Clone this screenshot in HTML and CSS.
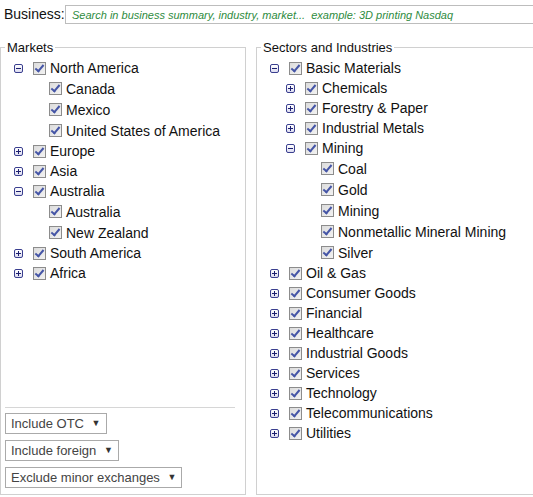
FILE: index.html
```html
<!DOCTYPE html>
<html>
<head>
<meta charset="utf-8">
<link rel="stylesheet" href="styles.css">
</head>
<body>
<div class="top">
  <label class="biz-label">Business:</label>
  <div class="search"><span class="placeholder">Search in business summary, industry, market...&nbsp; example: 3D printing Nasdaq</span></div>
</div>
<div class="panels">
  <fieldset class="panel markets">
    <legend>Markets</legend>
    <ul class="tree">
      <li><div class="row"><span class="tg minus"></span><span class="cb"></span><span class="lbl">North America</span></div>
        <ul>
          <li><div class="row leaf"><span class="tg none"></span><span class="cb"></span><span class="lbl">Canada</span></div></li>
          <li><div class="row leaf"><span class="tg none"></span><span class="cb"></span><span class="lbl">Mexico</span></div></li>
          <li><div class="row leaf"><span class="tg none"></span><span class="cb"></span><span class="lbl">United States of America</span></div></li>
        </ul>
      </li>
      <li><div class="row"><span class="tg plus"></span><span class="cb"></span><span class="lbl">Europe</span></div></li>
      <li><div class="row"><span class="tg plus"></span><span class="cb"></span><span class="lbl">Asia</span></div></li>
      <li><div class="row"><span class="tg minus"></span><span class="cb"></span><span class="lbl">Australia</span></div>
        <ul>
          <li><div class="row leaf"><span class="tg none"></span><span class="cb"></span><span class="lbl">Australia</span></div></li>
          <li><div class="row leaf"><span class="tg none"></span><span class="cb"></span><span class="lbl">New Zealand</span></div></li>
        </ul>
      </li>
      <li><div class="row"><span class="tg plus"></span><span class="cb"></span><span class="lbl">South America</span></div></li>
      <li><div class="row"><span class="tg plus"></span><span class="cb"></span><span class="lbl">Africa</span></div></li>
    </ul>
    <div class="options">
      <div class="sel">Include OTC <span class="arr">▼</span></div>
      <div class="sel">Include foreign <span class="arr">▼</span></div>
      <div class="sel">Exclude minor exchanges <span class="arr">▼</span></div>
    </div>
  </fieldset>
  <fieldset class="panel sectors">
    <legend>Sectors and Industries</legend>
    <ul class="tree">
      <li><div class="row"><span class="tg minus"></span><span class="cb"></span><span class="lbl">Basic Materials</span></div>
        <ul>
          <li><div class="row"><span class="tg plus"></span><span class="cb"></span><span class="lbl">Chemicals</span></div></li>
          <li><div class="row"><span class="tg plus"></span><span class="cb"></span><span class="lbl">Forestry &amp; Paper</span></div></li>
          <li><div class="row"><span class="tg plus"></span><span class="cb"></span><span class="lbl">Industrial Metals</span></div></li>
          <li><div class="row"><span class="tg minus"></span><span class="cb"></span><span class="lbl">Mining</span></div>
            <ul>
              <li><div class="row leaf"><span class="tg none"></span><span class="cb"></span><span class="lbl">Coal</span></div></li>
              <li><div class="row leaf"><span class="tg none"></span><span class="cb"></span><span class="lbl">Gold</span></div></li>
              <li><div class="row leaf"><span class="tg none"></span><span class="cb"></span><span class="lbl">Mining</span></div></li>
              <li><div class="row leaf"><span class="tg none"></span><span class="cb"></span><span class="lbl">Nonmetallic Mineral Mining</span></div></li>
              <li><div class="row leaf"><span class="tg none"></span><span class="cb"></span><span class="lbl">Silver</span></div></li>
            </ul>
          </li>
        </ul>
      </li>
      <li><div class="row"><span class="tg plus"></span><span class="cb"></span><span class="lbl">Oil &amp; Gas</span></div></li>
      <li><div class="row"><span class="tg plus"></span><span class="cb"></span><span class="lbl">Consumer Goods</span></div></li>
      <li><div class="row"><span class="tg plus"></span><span class="cb"></span><span class="lbl">Financial</span></div></li>
      <li><div class="row"><span class="tg plus"></span><span class="cb"></span><span class="lbl">Healthcare</span></div></li>
      <li><div class="row"><span class="tg plus"></span><span class="cb"></span><span class="lbl">Industrial Goods</span></div></li>
      <li><div class="row"><span class="tg plus"></span><span class="cb"></span><span class="lbl">Services</span></div></li>
      <li><div class="row"><span class="tg plus"></span><span class="cb"></span><span class="lbl">Technology</span></div></li>
      <li><div class="row"><span class="tg plus"></span><span class="cb"></span><span class="lbl">Telecommunications</span></div></li>
      <li><div class="row"><span class="tg plus"></span><span class="cb"></span><span class="lbl">Utilities</span></div></li>
    </ul>
  </fieldset>
</div>
</body>
</html>
```
FILE: styles.css
```css
html, body {
  margin: 0;
  padding: 0;
  background: #fff;
}
body {
  font-family: "Liberation Sans", Arial, sans-serif;
  font-size: 13px;
  color: #111;
  width: 533px;
  height: 497px;
  overflow: hidden;
}
.top {
  display: flex;
  align-items: flex-start;
  height: 40px;
  box-sizing: border-box;
  padding-top: 5px;
}
.biz-label {
  font-size: 14px;
  line-height: 19px;
  padding-left: 4px;
  width: 61px;
  white-space: nowrap;
  flex: none;
  color: #111;
}
.search {
  flex: none;
  width: 480px;
  height: 19px;
  box-sizing: border-box;
  border: 1px solid #bdbdbd;
  padding-left: 6px;
  line-height: 17px;
}
.placeholder {
  font-size: 11px;
  font-style: italic;
  color: #2e8b3e;
  white-space: nowrap;
}
.panels {
  display: flex;
  gap: 10px;
  height: 455px;
}
.panel {
  margin: 0;
  border: 1px solid #d0d0d0;
  padding: 0 4px 0 4px;
  min-width: 0;
  box-sizing: border-box;
  height: 455px;
}
.panel legend {
  padding: 0 2px;
  font-size: 13px;
  line-height: 15px;
  color: #111;
}
.markets {
  width: 246px;
  flex: none;
  display: flex;
  flex-direction: column;
}
.sectors {
  width: 290px;
  flex: none;
}
.tree, .tree ul {
  list-style: none;
  margin: 0;
  padding: 0;
}
.tree {
  padding-left: 9px;
  padding-top: 3px;
}
.tree ul {
  padding-left: 16px;
}
.row {
  display: flex;
  align-items: center;
  height: 20px;
}
.row.leaf {
  height: 21px;
}
.tg {
  width: 9px;
  height: 9px;
  box-sizing: border-box;
  flex: none;
  margin-right: 10px;
  position: relative;
  border: 1px solid #3a3f8f;
  border-radius: 2px;
  background: linear-gradient(#ffffff, #dcdcf0);
}
.tg.none {
  border: none;
  background: none;
}
.tg.minus::before, .tg.plus::before {
  content: "";
  position: absolute;
  left: 1px;
  top: 3px;
  width: 5px;
  height: 1px;
  background: #1c1f6e;
}
.tg.plus::after {
  content: "";
  position: absolute;
  left: 3px;
  top: 1px;
  width: 1px;
  height: 5px;
  background: #1c1f6e;
}
.cb {
  width: 13px;
  height: 13px;
  box-sizing: border-box;
  flex: none;
  border: 1px solid #8c8c8c;
  background: linear-gradient(135deg, #dcdcdc, #f2f2f2);
  position: relative;
  margin-right: 4px;
}
.cb::after {
  content: "";
  position: absolute;
  left: 3px;
  top: 0px;
  width: 3px;
  height: 7px;
  border-right: 2px solid #4555a6;
  border-bottom: 2px solid #4555a6;
  transform: rotate(40deg);
}
.lbl {
  white-space: nowrap;
  font-size: 14px;
  line-height: 20px;
}
.options {
  margin-top: auto;
  border-top: 1px solid #d6d6d6;
  margin-right: 6px;
  padding-top: 5px;
  padding-bottom: 6px;
  display: flex;
  flex-direction: column;
  align-items: flex-start;
  gap: 6px;
}
.sel {
  height: 21px;
  box-sizing: border-box;
  border: 1px solid #aaaaaa;
  padding: 0 5px 0 5px;
  line-height: 19px;
  color: #444;
  white-space: nowrap;
  background: #fff;
}
.arr {
  font-size: 9px;
  vertical-align: 2px;
  margin-left: 4px;
  color: #333;
}
```
